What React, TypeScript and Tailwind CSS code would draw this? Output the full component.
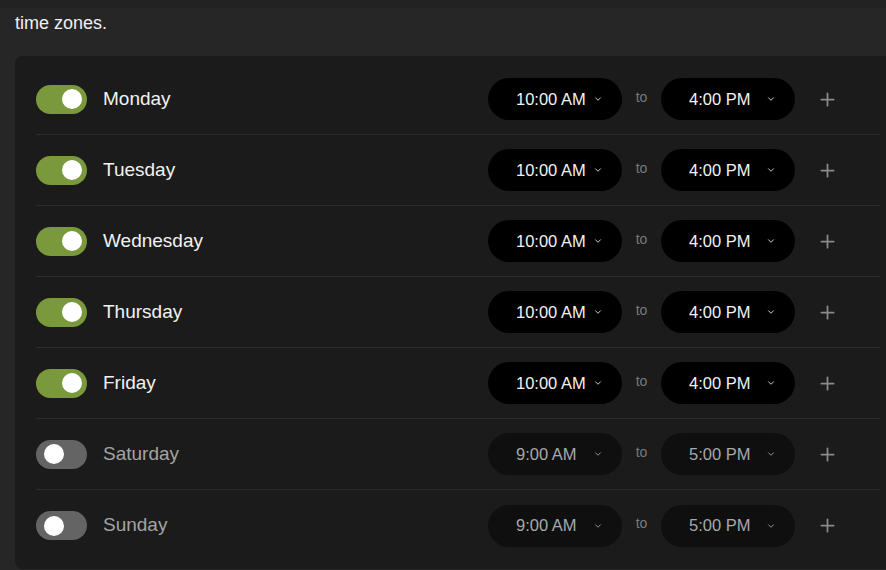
import React from "react";
import { ChevronDown, Plus } from "lucide-react";

interface DayRow {
  day: string;
  enabled: boolean;
  start: string;
  end: string;
}

const days: DayRow[] = [
  { day: "Monday", enabled: true, start: "10:00 AM", end: "4:00 PM" },
  { day: "Tuesday", enabled: true, start: "10:00 AM", end: "4:00 PM" },
  { day: "Wednesday", enabled: true, start: "10:00 AM", end: "4:00 PM" },
  { day: "Thursday", enabled: true, start: "10:00 AM", end: "4:00 PM" },
  { day: "Friday", enabled: true, start: "10:00 AM", end: "4:00 PM" },
  { day: "Saturday", enabled: false, start: "9:00 AM", end: "5:00 PM" },
  { day: "Sunday", enabled: false, start: "9:00 AM", end: "5:00 PM" },
];

function Toggle({ on }: { on: boolean }) {
  return (
    <div
      className={`w-[51px] h-[29px] rounded-full flex items-center shrink-0 ${
        on ? "bg-[#7a993c] justify-end pr-[5px]" : "bg-[#646464] justify-start pl-[8px]"
      }`}
    >
      <div className="w-[20px] h-[20px] rounded-full bg-white" />
    </div>
  );
}

function TimeSelect({ value, on }: { value: string; on: boolean }) {
  return (
    <div
      className={`w-[134px] h-[42px] rounded-full flex items-center pl-[28px] pr-[19px] ${
        on ? "bg-black text-[#f2f2f2]" : "bg-[#0f0f0f] text-[#a8a8a8]"
      }`}
    >
      <span className="text-[16.5px]">{value}</span>
      <ChevronDown className="w-[10px] h-[10px] ml-auto" strokeWidth={2} />
    </div>
  );
}

export default function App() {
  return (
    <div
      className="w-[886px] h-[570px] bg-[#262626] overflow-hidden"
      style={{ fontFamily: '"Liberation Sans", Arial, sans-serif' }}
    >
      <div className="h-2 bg-[#222222]" />
      <p className="pl-[15px] mt-[3px] text-[18px] leading-6 text-[#f0f0f0]">time zones.</p>
      <div className="ml-[15px] mt-[21px] bg-[#1b1b1b] rounded-l-lg pl-[21px] pr-[6px] pt-2 pb-2">
        {days.map((d, i) => (
          <div
            key={d.day}
            className={`h-[71px] flex items-center pr-[37px] ${
              i < days.length - 1 ? "border-b border-[#2c2c2c]" : "h-[70px]"
            }`}
          >
            <Toggle on={d.enabled} />
            <span
              className={`ml-4 flex-1 text-[19px] ${d.enabled ? "text-[#f2f2f2]" : "text-[#a3a3a3]"}`}
            >
              {d.day}
            </span>
            <TimeSelect value={d.start} on={d.enabled} />
            <span className="w-[39px] text-center text-[14px] text-[#7a7a7a] -mt-1">to</span>
            <TimeSelect value={d.end} on={d.enabled} />
            <button className="ml-4 w-8 h-8 flex items-center justify-center text-[#8a8a8a]">
              <Plus className="w-[21px] h-[21px]" strokeWidth={2} />
            </button>
          </div>
        ))}
      </div>
    </div>
  );
}
